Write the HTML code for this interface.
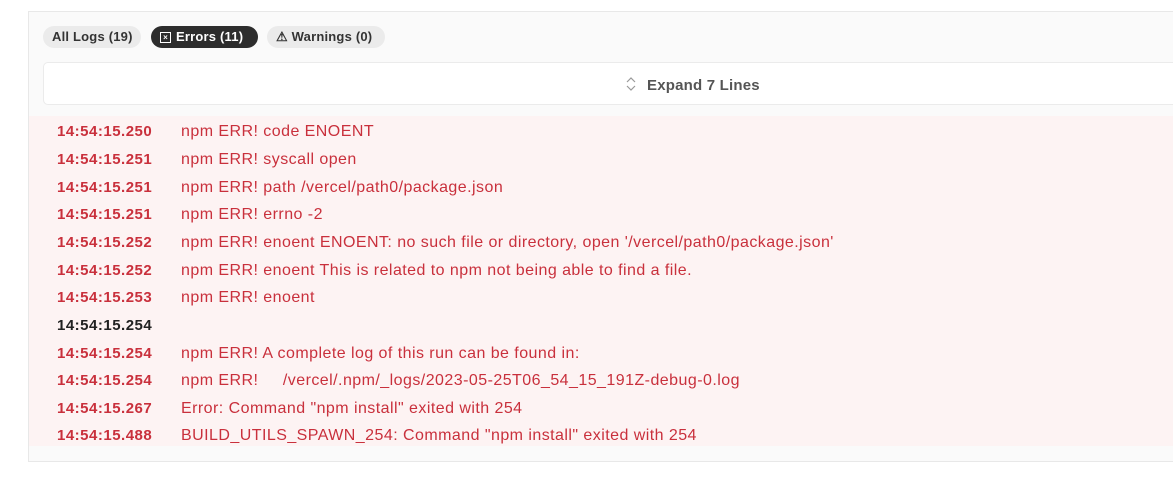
<!DOCTYPE html>
<html><head><style>
body{margin:0;width:1173px;height:480px;background:#fff;font-family:"Liberation Sans",sans-serif;position:relative;overflow:hidden}
.panel{position:absolute;left:28px;top:11px;width:1145px;height:449px;background:#fafafa;border-left:1px solid #e8e8e8;border-top:1px solid #e8e8e8;border-bottom:1px solid #e8e8e8}
.btn{position:absolute;top:14px;height:22px;border-radius:11px;background:#ebebeb;color:#333;font-size:13px;font-weight:bold;line-height:22px;padding:0 9px;box-sizing:border-box;white-space:nowrap;letter-spacing:.2px}
.box{position:absolute;left:14px;top:50px;width:1140px;height:43px;background:#fff;border:1px solid #ebebeb;border-radius:5px;box-sizing:border-box;line-height:41px;font-size:15px;font-weight:bold;color:#555;letter-spacing:.2px}
.log{position:absolute;left:0;top:104px;width:1145px;height:330px;background:#fdf3f3}
.row{position:absolute;left:28px;height:20px;line-height:20px;font-size:16px;letter-spacing:.45px;color:#c9303c;white-space:pre}
.row span{display:inline-block;width:124px;font-size:15px;letter-spacing:.5px;font-weight:bold}
</style></head><body>
<div class="panel">
<div class="btn" style="left:14px;width:98px">All Logs (19)</div>
<div class="btn" style="left:122px;width:107px;background:#2d2d2d;color:#fff"><span style="display:inline-block;width:9px;height:9px;border:1px solid #fff;font-size:8px;line-height:9px;text-align:center;vertical-align:1px;margin-right:5px;letter-spacing:0">×</span>Errors (11)</div>
<div class="btn" style="left:238px;width:118px">⚠ Warnings (0)</div>
<div class="box"><svg width="12" height="16" viewBox="0 0 12 16" style="position:absolute;left:581px;top:13px"><path d="M2 6 L6 2 L10 6 M2 10 L6 14 L10 10" fill="none" stroke="#999" stroke-width="1.2"/></svg><span style="position:absolute;left:603px;top:2px">Expand 7 Lines</span></div>
<div class="log">
<div class="row" style="top:6px"><span>14:54:15.250</span>npm ERR! code ENOENT</div>
<div class="row" style="top:34px"><span>14:54:15.251</span>npm ERR! syscall open</div>
<div class="row" style="top:62px"><span>14:54:15.251</span>npm ERR! path /vercel/path0/package.json</div>
<div class="row" style="top:89px"><span>14:54:15.251</span>npm ERR! errno -2</div>
<div class="row" style="top:117px"><span>14:54:15.252</span>npm ERR! enoent ENOENT: no such file or directory, open '/vercel/path0/package.json'</div>
<div class="row" style="top:145px"><span>14:54:15.252</span>npm ERR! enoent This is related to npm not being able to find a file.</div>
<div class="row" style="top:172px"><span>14:54:15.253</span>npm ERR! enoent</div>
<div class="row" style="top:200px;color:#222"><span>14:54:15.254</span></div>
<div class="row" style="top:228px"><span>14:54:15.254</span>npm ERR! A complete log of this run can be found in:</div>
<div class="row" style="top:255px"><span>14:54:15.254</span>npm ERR!     /vercel/.npm/_logs/2023-05-25T06_54_15_191Z-debug-0.log</div>
<div class="row" style="top:283px"><span>14:54:15.267</span>Error: Command "npm install" exited with 254</div>
<div class="row" style="top:310px"><span>14:54:15.488</span>BUILD_UTILS_SPAWN_254: Command "npm install" exited with 254</div>
</div>
</div>
</body></html>
